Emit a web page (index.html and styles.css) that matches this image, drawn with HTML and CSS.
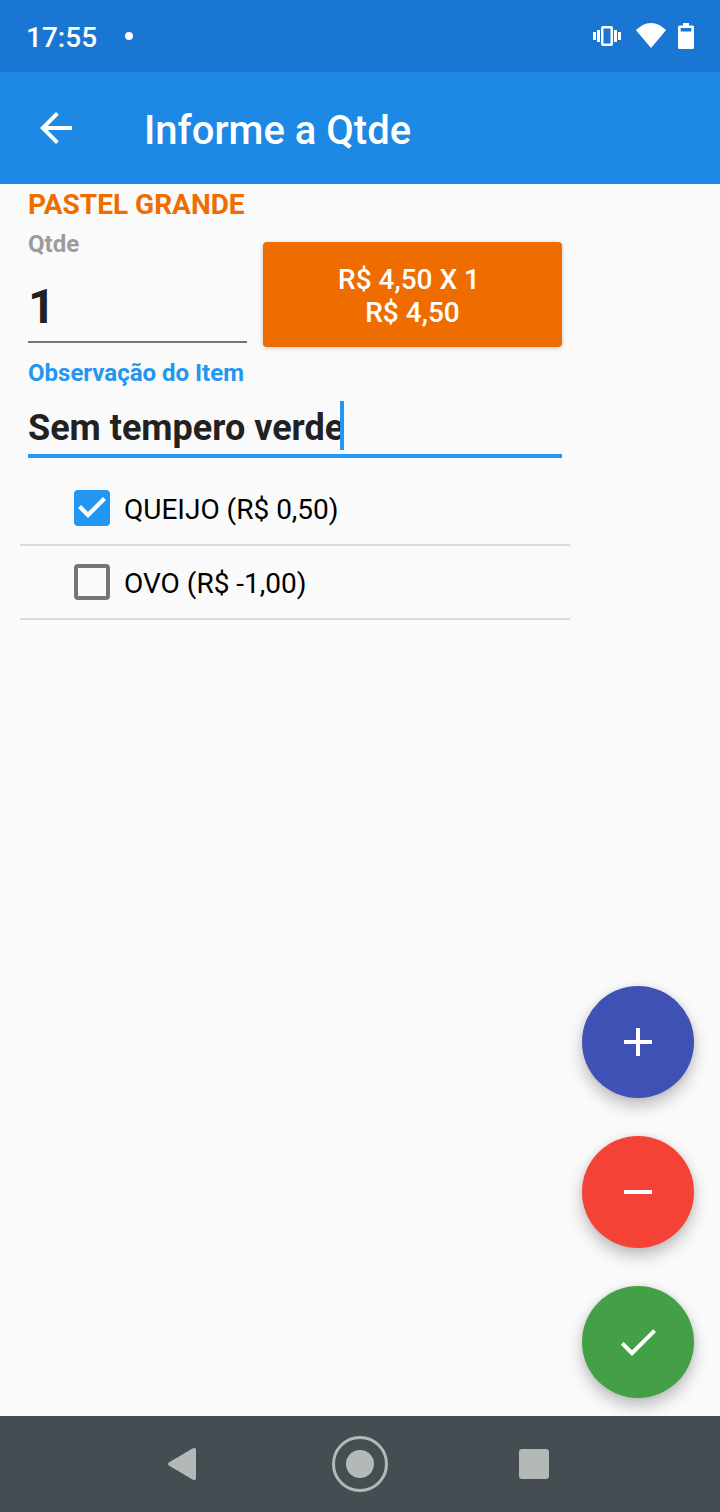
FILE: index.html
```html
<!DOCTYPE html>
<html lang="pt-BR">
<head>
<meta charset="utf-8">
<meta name="viewport" content="width=device-width, initial-scale=1">
<title>Informe a Qtde</title>
<link rel="stylesheet" href="styles.css">
</head>
<body>
<div class="screen">
  <div class="status-bar">
    <span class="clock">17:55</span>
    <span class="notification-dot"></span>
    <div class="status-icons">
      <svg width="31" height="26" viewBox="0 0 31 26" fill="#fff"><path d="M0 9h3v8H0zM4 7h3v12H4zM21 7h3v12h-3zM25 9h3v8h-3z"/><path fill-rule="evenodd" d="M10 3h8a2 2 0 0 1 2 2v16a2 2 0 0 1-2 2h-8a2 2 0 0 1-2-2V5a2 2 0 0 1 2-2zM10.500 5.500v15h7v-15z"/></svg>
      <svg width="30" height="26" viewBox="0 0 30 26" fill="#fff"><path d="M15 25 0 7.200C4 3.200 9 0 15 0s11 3.200 15 7.200z"/></svg>
      <svg width="16" height="26" viewBox="0 0 16 26" fill="#fff"><path fill-rule="evenodd" d="M5 0h6v2.500h3.500A1.500 1.500 0 0 1 16 4v20.500a1.500 1.500 0 0 1-1.500 1.500h-13A1.500 1.500 0 0 1 0 24.500V4a1.500 1.500 0 0 1 1.500-1.500H5zM2.700 5v3.500h10.600V5z"/></svg>
    </div>
  </div>

  <header class="app-bar">
    <button class="icon-button" type="button" aria-label="Voltar">
      <svg width="48" height="48" viewBox="0 0 24 24" fill="#fff"><path d="M20 11H7.830l5.590-5.590L12 4l-8 8 8 8 1.410-1.410L7.830 13H20z"/></svg>
    </button>
    <h1 class="title">Informe a Qtde</h1>
  </header>

  <main class="content">
    <form class="item-form">
      <div class="fields">
        <h2 class="product">PASTEL GRANDE</h2>
        <div class="quantity-row">
          <div class="quantity">
            <label class="label" for="qty">Qtde</label>
            <input class="quantity-input" id="qty" type="text" inputmode="numeric" value="1">
          </div>
          <button class="total-button" type="button">R$ 4,50 X 1 
R$ 4,50</button>
        </div>
        <label class="label label-active" for="note">Observação do Item</label>
        <div class="note-box">
          <input class="note-input" id="note" type="text" size="16" value="Sem tempero verde">
          <span class="cursor"></span>
        </div>
      </div>
      <ul class="extras">
        <li class="extra"><input class="check" id="queijo" type="checkbox" checked><label for="queijo">QUEIJO (R$ 0,50)</label></li>
        <li class="extra"><input class="check" id="ovo" type="checkbox"><label for="ovo">OVO (R$ -1,00)</label></li>
      </ul>
    </form>
    <div class="actions">
      <button class="fab fab-add" type="button" aria-label="Adicionar"><svg width="48" height="48" viewBox="0 0 24 24" fill="#fff"><path d="M19 13h-6v6h-2v-6H5v-2h6V5h2v6h6z"/></svg></button>
      <button class="fab fab-remove" type="button" aria-label="Remover"><svg width="48" height="48" viewBox="0 0 24 24" fill="#fff"><path d="M5 11h14v2H5z"/></svg></button>
      <button class="fab fab-confirm" type="button" aria-label="Confirmar"><svg width="48" height="48" viewBox="0 0 24 24" fill="#fff"><path d="M9 16.170 4.830 12l-1.420 1.410L9 19 21 7l-1.410-1.410z"/></svg></button>
    </div>
  </main>

  <nav class="nav-bar">
    <button class="icon-button" type="button" aria-label="Voltar"><svg width="56" height="56" viewBox="0 0 56 56" fill="#b3b8b8"><path d="M10.800 26.600 34.900 12.300Q38 11 38 14v28q0 3-3.100 1.700L10.800 29.400q-1.800-1.400 0-2.800z"/></svg></button>
    <button class="icon-button" type="button" aria-label="Início"><svg width="56" height="56" viewBox="0 0 56 56"><circle cx="28" cy="28" r="26.500" fill="none" stroke="#b3b8b8" stroke-width="3"/><circle cx="28" cy="28" r="14" fill="#b3b8b8"/></svg></button>
    <button class="icon-button" type="button" aria-label="Recentes"><svg width="56" height="56" viewBox="0 0 56 56"><rect x="13" y="13" width="30" height="30" rx="3" fill="#b3b8b8"/></svg></button>
  </nav>
</div>
</body>
</html>
```

FILE: styles.css
```css
* {
  box-sizing: border-box;
}

body {
  margin: 0;
  background: #fafafa;
  color: #212121;
  font-family: Roboto, "Noto Sans", sans-serif;
}

button,
input {
  margin: 0;
  padding: 0;
  border: 0;
  border-radius: 0;
  background: none;
  color: inherit;
  font: inherit;
  outline: none;
}

svg {
  display: block;
}

.screen {
  display: flex;
  flex-direction: column;
  min-height: 100vh;
}

.status-bar {
  display: flex;
  align-items: center;
  height: 72px;
  padding: 0 26px;
  background: #1976d2;
  color: #fff;
}

.clock {
  padding-top: 4px;
  font-size: 28px;
  font-weight: 500;
  line-height: 32px;
}

.notification-dot {
  width: 8px;
  height: 8px;
  margin-left: 28px;
  border-radius: 50%;
  background: #fff;
}

.status-icons {
  display: flex;
  align-items: center;
  gap: 12px;
  margin-left: auto;
}

.app-bar {
  display: flex;
  align-items: center;
  gap: 64px;
  height: 112px;
  padding: 0 32px;
  background: #1e88e5;
  color: #fff;
}

.title {
  margin: 0;
  padding-top: 6px;
  font-size: 40px;
  font-weight: 500;
  line-height: 48px;
}

.content {
  display: flex;
  flex: 1;
}

.item-form {
  flex: 1;
  padding: 4px 0 0 20px;
}

.fields {
  padding: 0 8px;
}

.product {
  margin: 0;
  color: #ef6c00;
  font-size: 28px;
  font-weight: 700;
  line-height: 34px;
}

.quantity-row {
  display: grid;
  grid-template-columns: 219fr 299fr;
  gap: 16px;
  margin-bottom: 12px;
}

.quantity {
  padding-top: 8px;
}

.label {
  display: block;
  color: #9b9b9b;
  font-size: 24px;
  font-weight: 700;
  line-height: 28px;
}

.label-active {
  color: #2196f3;
}

.quantity-input {
  width: 100%;
  height: 85px;
  padding-top: 14px;
  border-bottom: 2px solid #757575;
  font-size: 48px;
  font-weight: 700;
}

.total-button {
  align-self: end;
  height: 105px;
  margin-top: 20px;
  padding-top: 2px;
  border-radius: 4px;
  background: #ef6c00;
  box-shadow: 0 1px 4px rgba(0, 0, 0, 0.22);
  color: #fff;
  font-size: 28px;
  font-weight: 500;
  line-height: 33px;
  text-align: center;
  white-space: pre;
}

.note-box {
  display: flex;
  align-items: center;
  height: 71px;
  padding-top: 10px;
  border-bottom: 4px solid #2196f3;
}

.note-input {
  padding-top: 4px;
  field-sizing: content;
  font-size: 36px;
  font-weight: 700;
}

.cursor {
  width: 4px;
  height: 49px;
  margin-left: -4px;
  background: #2196f3;
}

.extras {
  margin: 0;
  padding: 14px 0 0;
  list-style: none;
}

.extra {
  display: flex;
  align-items: center;
  gap: 14px;
  height: 74px;
  padding-left: 54px;
  border-bottom: 2px solid #dadada;
  color: #000;
  font-size: 28px;
  line-height: 32px;
}

.extra label {
  padding-top: 4px;
}

.check {
  width: 36px;
  height: 36px;
  border: 4px solid #757575;
  border-radius: 4px;
  appearance: none;
}

.check:checked {
  border-color: #2196f3;
  background: #2196f3;
}

.check:checked::before {
  display: block;
  width: 28px;
  height: 28px;
  background: #fff;
  clip-path: polygon(0 14px, 3px 11px, 10px 18px, 25px 3px, 28px 6px, 10px 24px);
  content: "";
}

.actions {
  display: flex;
  flex-direction: column;
  justify-content: flex-end;
  gap: 38px;
  padding: 0 26px 18px 12px;
}

.fab {
  display: flex;
  align-items: center;
  justify-content: center;
  width: 112px;
  height: 112px;
  border-radius: 50%;
  box-shadow: 0 8px 16px rgba(0, 0, 0, 0.24), 0 0 6px rgba(0, 0, 0, 0.08);
}

.fab-add {
  background: #3f51b5;
}

.fab-remove {
  background: #f44336;
}

.fab-confirm {
  background: #43a047;
}

.nav-bar {
  display: flex;
  align-items: center;
  justify-content: center;
  gap: 118px;
  height: 96px;
  z-index: 1;
  background: #464d52;
}
```
